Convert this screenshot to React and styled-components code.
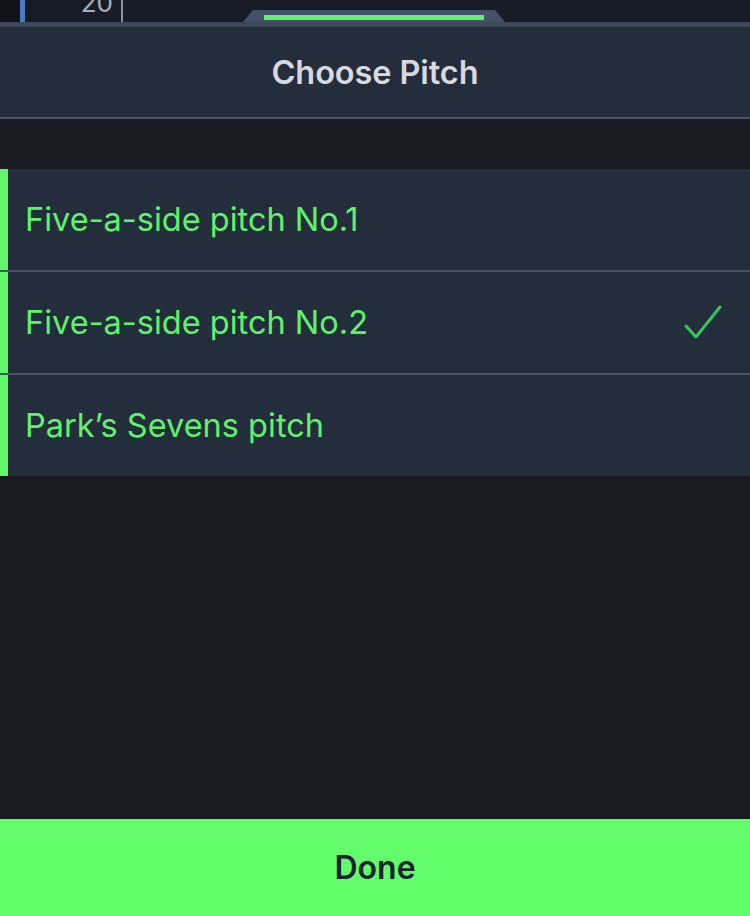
import React, { useState } from 'react'
import styled, { createGlobalStyle } from 'styled-components'

const GlobalStyle = createGlobalStyle`
  html, body {
    margin: 0;
    padding: 0;
    background: #171a21;
  }
  body {
    font-family: Inter, "Noto Sans", "Liberation Sans", sans-serif;
    -webkit-font-smoothing: antialiased;
  }
`

const pitches = [
  'Five-a-side pitch No.1',
  'Five-a-side pitch No.2',
  'Park\u2019s Sevens pitch',
]

const Screen = styled.div`
  width: 750px;
  height: 916px;
  display: flex;
  flex-direction: column;
  background: #171a21;
  overflow: hidden;
`

const TopStrip = styled.div`
  height: 22px;
  display: flex;
  align-items: stretch;
  background: #161b25;
  position: relative;
`

const Gutter = styled.div`
  width: 20px;
  background: #10131a;
`

const BlueMarker = styled.div`
  width: 5px;
  background: #4a7cc0;
`

const AxisLabel = styled.div`
  width: 98px;
  box-sizing: border-box;
  padding-right: 8px;
  text-align: right;
  color: #a9afba;
  font-size: 26px;
  line-height: 22px;
  margin-top: -8px;
  border-right: 2px solid #8c939f;
`

const Handle = styled.div`
  position: absolute;
  left: 243px;
  bottom: 0;
  width: 262px;
  height: 12px;
  background: #46506a;
  clip-path: polygon(10px 0, calc(100% - 10px) 0, 100% 100%, 0 100%);
  display: flex;
  justify-content: center;
  padding-top: 5px;
  box-sizing: border-box;
`

const HandleBar = styled.div`
  width: 220px;
  height: 5px;
  background: #62f06a;
`

const Header = styled.div`
  height: 90px;
  background: #242d3c;
  border-top: 5px solid #3f4858;
  border-bottom: 2px solid #4a5366;
  display: flex;
  align-items: center;
  justify-content: center;
  color: #d6d9de;
  font-size: 32.5px;
  font-weight: 600;
  letter-spacing: -0.1px;
`

const Spacer = styled.div`
  height: 50px;
`

const List = styled.div`
  display: flex;
  flex-direction: column;
  gap: 2px;
  background: #4a5366;
`

const Row = styled.div`
  height: 101px;
  display: flex;
  align-items: center;
  justify-content: space-between;
  background: #242d3c;
  border-left: 8px solid #62f76b;
  padding: 0 28px 0 17px;
  cursor: pointer;
`

const RowLabel = styled.span`
  color: #5ef36a;
  font-size: 32.5px;
  font-weight: 400;
  letter-spacing: 0;
`

const Check = styled.svg`
  width: 38px;
  height: 38px;
`

const Fill = styled.div`
  flex: 1;
`

const DoneButton = styled.button`
  height: 97px;
  border: none;
  background: #63fd6b;
  color: #1c2330;
  font-family: inherit;
  font-size: 32px;
  font-weight: 600;
  cursor: pointer;
`

export default function App() {
  const [selected, setSelected] = useState(1)
  return (
    <>
      <GlobalStyle />
      <Screen>
        <TopStrip>
          <Gutter />
          <BlueMarker />
          <AxisLabel>20</AxisLabel>
          <Handle><HandleBar /></Handle>
        </TopStrip>
        <Header>Choose Pitch</Header>
        <Spacer />
        <List>
          {pitches.map((name, i) => (
            <Row key={name} onClick={() => setSelected(i)}>
              <RowLabel>{name}</RowLabel>
              {selected === i && (
                <Check viewBox="0 0 38 38">
                  <path d="M2 22 L12 33 L36 3" fill="none" stroke="#34c759" strokeWidth="3" strokeLinecap="round" strokeLinejoin="round" />
                </Check>
              )}
            </Row>
          ))}
        </List>
        <Fill />
        <DoneButton>Done</DoneButton>
      </Screen>
    </>
  )
}
